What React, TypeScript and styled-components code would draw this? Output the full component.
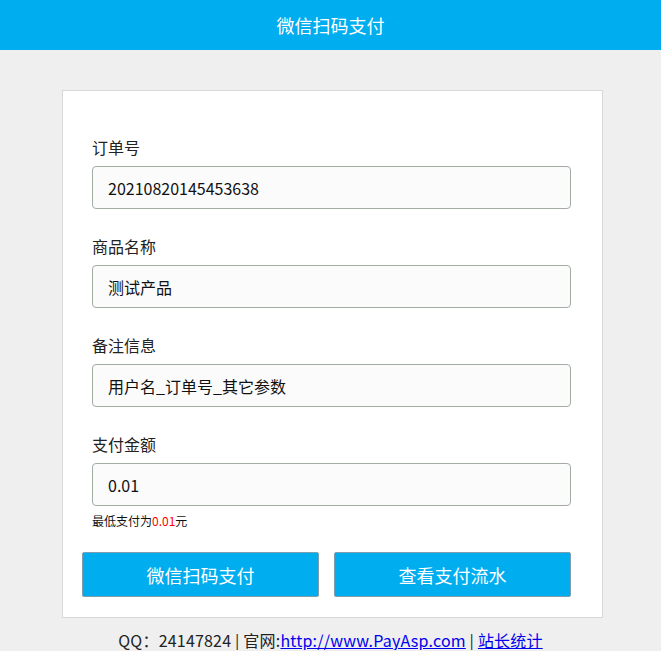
import styled, { createGlobalStyle } from "styled-components";

const GlobalStyle = createGlobalStyle`
  html, body {
    margin: 0;
    padding: 0;
    background: #efeff0;
    font-family: "Noto Sans CJK SC", "Open Sans", sans-serif;
    color: #222;
  }
`;

const Header = styled.header`
  height: 50px;
  background: #00adef;
  color: #fff;
  font-size: 18px;
  display: flex;
  align-items: center;
  justify-content: center;
`;

const Card = styled.div`
  width: 541px;
  margin: 40px 0 0 62px;
  background: #fff;
  border: 1px solid #d8d8d8;
  padding: 46px 0 20px;
  box-sizing: border-box;
`;

const Fields = styled.div`
  display: flex;
  flex-direction: column;
  gap: 27px;
  padding: 0 31px 0 29px;
`;

const Label = styled.div`
  font-size: 16px;
  line-height: 20px;
  margin-bottom: 9px;
`;

const Input = styled.input`
  display: block;
  width: 100%;
  height: 43px;
  box-sizing: border-box;
  border: 1px solid #a3aca3;
  border-radius: 4px;
  background: #fbfbfc;
  padding: 0 15px;
  font-family: inherit;
  font-size: 16px;
  color: #111;
  outline: none;
`;

const Hint = styled.div`
  font-size: 12px;
  line-height: 16px;
  margin-top: 7px;
  color: #111;
`;

const Red = styled.span`
  color: #f00;
`;

const Buttons = styled.div`
  display: flex;
  gap: 15px;
  padding: 0 31px 0 19px;
  margin-top: 23px;
`;

const Button = styled.button`
  flex: 1;
  height: 45px;
  background: #00adef;
  border: 1px solid #7e9fb0;
  border-radius: 2px;
  color: #fff;
  font-family: inherit;
  font-size: 18px;
  cursor: pointer;
`;

const Footer = styled.div`
  text-align: center;
  font-size: 16px;
  line-height: 20px;
  margin-top: 12px;
  color: #222;
  letter-spacing: 0.2px;
  a {
    color: #0000ee;
  }
`;

export default function App() {
  return (
    <>
      <GlobalStyle />
      <Header>微信扫码支付</Header>
      <Card>
        <Fields>
          <div>
            <Label>订单号</Label>
            <Input defaultValue="20210820145453638" />
          </div>
          <div>
            <Label>商品名称</Label>
            <Input defaultValue="测试产品" />
          </div>
          <div>
            <Label>备注信息</Label>
            <Input defaultValue="用户名_订单号_其它参数" />
          </div>
          <div>
            <Label>支付金额</Label>
            <Input defaultValue="0.01" />
            <Hint>
              最低支付为<Red>0.01</Red>元
            </Hint>
          </div>
        </Fields>
        <Buttons>
          <Button>微信扫码支付</Button>
          <Button>查看支付流水</Button>
        </Buttons>
      </Card>
      <Footer>
        QQ：24147824 | 官网:<a href="#">http://www.PayAsp.com</a> | <a href="#">站长统计</a>
      </Footer>
    </>
  );
}
